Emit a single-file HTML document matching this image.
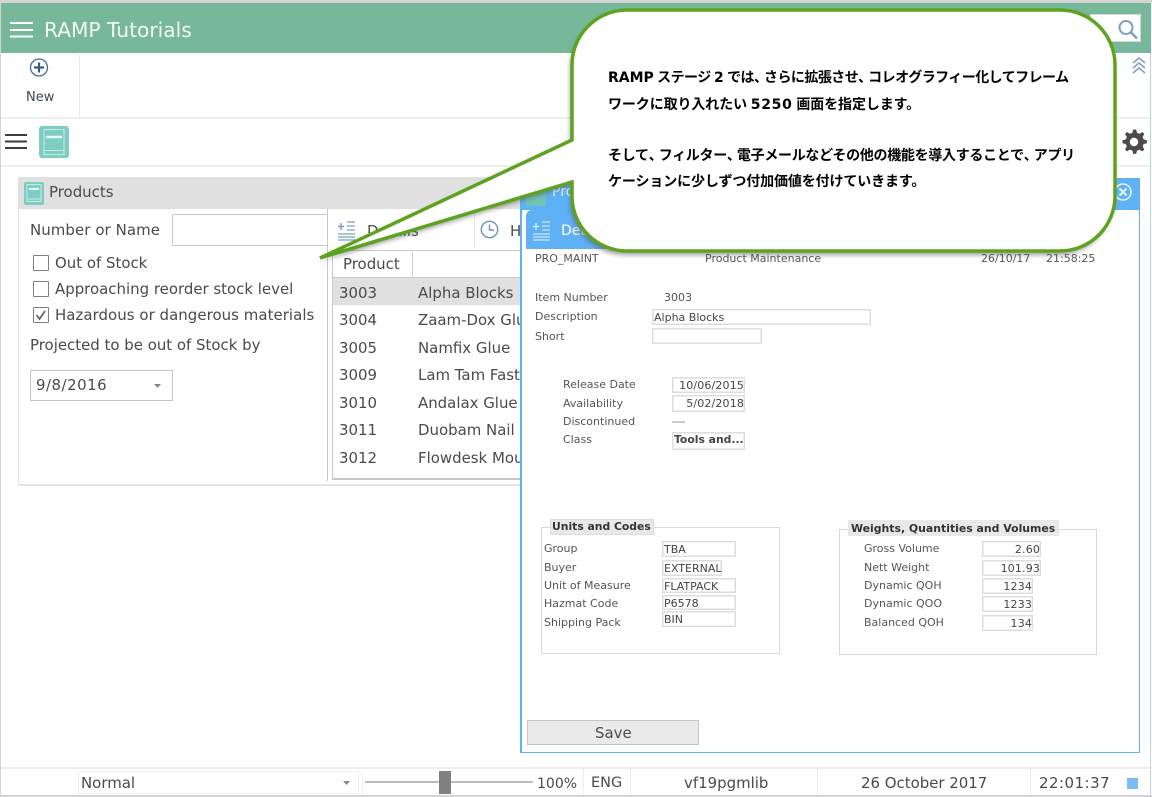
<!DOCTYPE html>
<html lang="ja"><head><meta charset="utf-8"><title>RAMP Tutorials</title>
<style>
html,body{margin:0;padding:0;background:#fff}
#r{position:relative;width:1152px;height:797px;overflow:hidden;background:#fff;font-family:"DejaVu Sans","Liberation Sans",sans-serif;color:#444;font-size:14px;filter:blur(.3px)}
#r div,#r span.t{position:absolute;white-space:nowrap}
.t{line-height:16px}
.m{font-size:14.950px;color:#4a4a4a}
.s{font-size:11px;color:#555;line-height:12px;transform:translateY(1px)}
.f{border:1px solid #ddd;box-shadow:inset 0 0 0 1px #eee;box-sizing:border-box;font-size:11px;color:#444;line-height:15px;padding:0 1px;background:#fff}
.rr{text-align:right;padding-right:0;letter-spacing:.15px}
.cb{width:16px;height:16px;border:1.500px solid #808080;border-radius:1px;box-sizing:border-box;background:#fff}
.j{font-family:"Liberation Sans","Noto Sans CJK JP",sans-serif;font-weight:700;font-size:14px;color:#000;line-height:20px;letter-spacing:-.25px}
.j b{font-family:"DejaVu Sans",sans-serif;font-weight:700;letter-spacing:0}
.j i{font-style:normal;letter-spacing:-4px}
svg{position:absolute;overflow:visible}
</style></head><body><div id="r">
<!-- frame -->
<div style="left:0;top:0;width:1152px;height:3px;background:#d4d4d4"></div>
<div style="left:0;top:0;width:1px;height:797px;background:#d4d4d4"></div>
<div style="left:1150px;top:53px;width:1px;height:744px;background:#bcd4ea"></div>
<div style="left:0;top:795px;width:1152px;height:2px;background:#d4d4d4"></div>
<!-- header -->
<div style="left:1px;top:3px;width:1150px;height:50px;background:#76b899"></div>
<svg style="left:0;top:0" width="40" height="50"><path d="M10 23H33M10 30H33M10 36.500H33" stroke="#fff" stroke-width="2"/></svg>
<span class="t" style="left:44px;top:18px;font-size:20.200px;line-height:24px;color:#f4fbf7">RAMP Tutorials</span>
<div style="left:1090px;top:14px;width:51px;height:28px;background:#fff;border:1px solid #d8d8d8;box-sizing:border-box"></div>
<svg style="left:1115px;top:17px" width="26" height="26" fill="none" stroke="#7b9fba" stroke-width="2"><circle cx="11" cy="10.500" r="6.500"/><path d="M16 15.500L22 21.500" stroke-width="2.500"/></svg>
<!-- toolbar -->
<svg style="left:28px;top:57px" width="22" height="22"><circle cx="11" cy="10.500" r="8.500" fill="none" stroke="#4a6d92" stroke-width="1.300"/><path d="M6 10.500H16M11 5.500V15.500" stroke="#38597f" stroke-width="2.200"/></svg>
<span class="t" style="left:26px;top:90px;font-size:13px;color:#3e4a55">New</span>
<div style="left:79px;top:55px;width:1px;height:61px;background:#e8e8e8"></div>
<svg style="left:1131px;top:56px" width="16" height="18" fill="none" stroke="#7d9fbf" stroke-width="1.500"><path d="M2 7L8 2L14 7M2 12L8 7L14 12M2 17L8 12L14 17"/></svg>
<div style="left:1px;top:117px;width:1149px;height:2px;background:#efefef"></div>
<!-- row 2 -->
<svg style="left:0;top:128px" width="30" height="26"><path d="M5 7H27M5 13.500H27M5 20H27" stroke="#3d3d3d" stroke-width="2"/></svg>
<div style="left:39px;top:126px;width:30px;height:32px;background:#7dcdc2;border-radius:3px"></div>
<svg style="left:39px;top:126px" width="30" height="32" fill="none"><rect x="5" y="3.500" width="20" height="25" stroke="#c6ebe5" stroke-width="1"/><path d="M7 11H23" stroke="#e8f8f5" stroke-width="2.500"/><path d="M5 24.500H25" stroke="#c6ebe5"/></svg>
<svg style="left:1121px;top:128px" width="26" height="28"><path d="M13 1.500l2.200 0 .8 3.300 2.500 1 2.900-1.800 2 2-1.800 2.900 1 2.500 3.300.8v3l-3.300.8-1 2.500 1.800 2.900-2 2-2.900-1.800-2.500 1-.8 3.300h-3l-.8-3.300-2.500-1-2.900 1.800-2-2 1.800-2.900-1-2.500-3.300-.8v-3l3.300-.8 1-2.500-1.800-2.900 2-2 2.900 1.800 2.500-1 .8-3.300z" fill="#4b4b4b"/><circle cx="13" cy="14" r="4.200" fill="#fff"/></svg>
<div style="left:1px;top:165px;width:1149px;height:2px;background:#efefef"></div>
<!-- Products panel -->
<div style="left:18px;top:177px;width:503px;height:32px;background:#e0e0e0"></div>
<div style="left:18px;top:209px;width:1px;height:276px;background:#e2e2e2"></div>
<div style="left:18px;top:484px;width:503px;height:1.500px;background:#e4e4e4"></div>
<div style="left:24px;top:182px;width:20px;height:23px;background:#7dcdc2;border-radius:2px"></div>
<svg style="left:24px;top:182px" width="20" height="23" fill="none"><rect x="3" y="2.500" width="14" height="17" stroke="#c6ebe5"/><path d="M5 7H15" stroke="#e8f8f5" stroke-width="2"/><path d="M3 17H17" stroke="#c6ebe5"/></svg>
<span class="t m" style="left:49px;top:184px">Products</span>
<span class="t m" style="left:30px;top:222px;letter-spacing:.08px">Number or Name</span>
<div style="left:172px;top:214px;width:156px;height:32px;border:1px solid #c8c8c8;box-sizing:border-box"></div>
<div style="left:327px;top:209px;width:1px;height:272px;background:#c8c8c8"></div>
<div class="cb" style="left:33px;top:255px"></div>
<span class="t m" style="left:55px;top:255px">Out of Stock</span>
<div class="cb" style="left:33px;top:281px"></div>
<span class="t m" style="left:55px;top:281px">Approaching reorder stock level</span>
<div class="cb" style="left:33px;top:307px"></div>
<svg style="left:33px;top:307px" width="16" height="16" fill="none"><path d="M3.500 8L6.500 12L12 4" stroke="#666" stroke-width="1.800"/></svg>
<span class="t m" style="left:55px;top:307px;letter-spacing:.05px">Hazardous or dangerous materials</span>
<span class="t m" style="left:30px;top:337px">Projected to be out of Stock by</span>
<div style="left:30px;top:370px;width:143px;height:31px;border:1px solid #c4c4c4;box-sizing:border-box"></div>
<span class="t m" style="left:36px;top:377px;letter-spacing:.5px">9/8/2016</span>
<svg style="left:153px;top:383px" width="10" height="6"><path d="M1 1H8L4.500 5z" fill="#888"/></svg>
<!-- details tabs -->
<svg style="left:337px;top:219px" width="20" height="22" fill="none" stroke="#7d9fbf"><path d="M4 4V11M1 7.500H7" stroke-width="1.500"/><path d="M10 3H18M10 7H18M10 11H18M1 15H18M1 18H18M1 21H18" stroke-width="1.300"/></svg>
<span class="t m" style="left:367px;top:223px">Details</span>
<div style="left:474px;top:212px;width:1px;height:36px;background:#e8e8e8"></div>
<svg style="left:480px;top:220px" width="20" height="20" fill="none" stroke="#6f93b3" stroke-width="1.400"><circle cx="9.500" cy="9.500" r="8.200"/><path d="M9.500 4.500V10H14"/></svg>
<span class="t m" style="left:510px;top:223px">H</span>
<div style="left:332px;top:250px;width:190px;height:1px;background:#c8c8c8"></div>
<div style="left:332px;top:250px;width:1px;height:229px;background:#c8c8c8"></div>
<div style="left:332px;top:478px;width:190px;height:1.500px;background:#c8c8c8"></div>
<div style="left:412px;top:251px;width:1px;height:26px;background:#d0d0d0"></div>
<span class="t m" style="left:343px;top:256px">Product</span>
<div style="left:333px;top:277px;width:188px;height:1px;background:#c8c8c8"></div>
<div style="left:333px;top:278px;width:188px;height:27px;background:#e0e0e0"></div>
<span class="t m" style="left:339px;top:285px">3003</span><span class="t m" style="left:418px;top:285px">Alpha Blocks</span>
<span class="t m" style="left:339px;top:312px">3004</span><span class="t m" style="left:418px;top:312px;width:102px;overflow:hidden">Zaam-Dox Glue</span>
<span class="t m" style="left:339px;top:340px">3005</span><span class="t m" style="left:418px;top:340px">Namfix Glue</span>
<span class="t m" style="left:339px;top:367px">3009</span><span class="t m" style="left:418px;top:367px;width:102px;overflow:hidden">Lam Tam Fastener</span>
<span class="t m" style="left:339px;top:395px">3010</span><span class="t m" style="left:418px;top:395px;width:102px;overflow:hidden">Andalax Glue</span>
<span class="t m" style="left:339px;top:422px">3011</span><span class="t m" style="left:418px;top:422px;width:102px;overflow:hidden">Duobam Nail</span>
<span class="t m" style="left:339px;top:450px">3012</span><span class="t m" style="left:418px;top:450px;width:102px;overflow:hidden">Flowdesk Mouse</span>
<!-- window -->
<div style="left:520px;top:178px;width:620px;height:575px;background:#fff;border:1px solid #5fb1f5;border-left-width:2px;box-sizing:border-box"></div>
<div style="left:520px;top:178px;width:620px;height:32px;background:#5fb1f5"></div>
<div style="left:526px;top:182px;width:20px;height:24px;background:#6fc2b8"></div>
<span class="t" style="left:552px;top:184px;font-size:14px;color:#eaf5ff">Products</span>
<svg style="left:1113px;top:182px" width="20" height="20" fill="none" stroke="#e8f4ff" stroke-width="1.600"><circle cx="10" cy="10" r="8"/><path d="M6.500 6.500L13.500 13.500M13.500 6.500L6.500 13.500" stroke-width="2"/></svg>
<div style="left:526px;top:210px;width:330px;height:39px;background:#5fb1f5;border-radius:6px 0 0 0"></div>
<svg style="left:532px;top:220px" width="20" height="22" fill="none" stroke="#cfe6fb"><path d="M4 3V10M1 6.500H7" stroke-width="1.500"/><path d="M10 2H18M10 6H18M10 10H18M1 14H18M1 17H18M1 20H18" stroke-width="1.300"/></svg>
<span class="t" style="left:561px;top:223px;font-size:14px;color:#fff">Details</span>
<span class="t s" style="left:535px;top:252px">PRO_MAINT</span>
<span class="t s" style="left:705px;top:252px">Product Maintenance</span>
<span class="t s" style="left:981px;top:252px">26/10/17</span>
<span class="t s" style="left:1046px;top:252px">21:58:25</span>
<span class="t s" style="left:535px;top:291px">Item Number</span>
<span class="t s" style="left:664px;top:291px">3003</span>
<span class="t s" style="left:535px;top:310px">Description</span>
<div class="f" style="left:652px;top:309px;width:219px;height:16px">Alpha Blocks</div>
<span class="t s" style="left:535px;top:330px">Short</span>
<div class="f" style="left:652px;top:328px;width:110px;height:16px"></div>
<span class="t s" style="left:563px;top:378px">Release Date</span>
<div class="f rr" style="left:672px;top:377px;width:73px;height:16px">10/06/2015</div>
<span class="t s" style="left:563px;top:397px">Availability</span>
<div class="f rr" style="left:672px;top:395px;width:73px;height:17px">5/02/2018</div>
<span class="t s" style="left:563px;top:415px">Discontinued</span>
<div style="left:672px;top:421px;width:13px;height:2px;background:#ccc"></div>
<span class="t s" style="left:563px;top:433px">Class</span>
<div class="f" style="left:672px;top:432px;width:73px;height:18px;font-weight:700;line-height:14px;overflow:hidden;font-size:10.800px">Tools and...</div>
<!-- fieldsets -->
<div style="left:541px;top:527px;width:239px;height:127px;border:1px solid #d8d8d8;box-sizing:border-box"></div>
<div style="left:550px;top:519px;height:16px;width:104px;background:#e8e8e8;border:1px solid #ddd;box-sizing:border-box"></div>
<span class="t s" style="left:552px;top:520px;font-weight:700;color:#333;font-size:10.800px">Units and Codes</span>
<span class="t s" style="left:544px;top:542px">Group</span><div class="f" style="left:662px;top:541px;width:74px;height:16px">TBA</div>
<span class="t s" style="left:544px;top:561px">Buyer</span><div class="f" style="left:662px;top:560px;width:60px;height:16px">EXTERNAL</div>
<span class="t s" style="left:544px;top:579px">Unit of Measure</span><div class="f" style="left:662px;top:578px;width:74px;height:15px">FLATPACK</div>
<span class="t s" style="left:544px;top:597px">Hazmat Code</span><div class="f" style="left:662px;top:595px;width:74px;height:15px">P6578</div>
<span class="t s" style="left:544px;top:616px">Shipping Pack</span><div class="f" style="left:662px;top:611px;width:74px;height:16px">BIN</div>
<div style="left:839px;top:529px;width:258px;height:126px;border:1px solid #d8d8d8;box-sizing:border-box"></div>
<div style="left:848px;top:520px;height:16px;width:211px;background:#e8e8e8;box-sizing:border-box"></div>
<span class="t s" style="left:851px;top:522px;font-weight:700;color:#333;font-size:10.900px">Weights, Quantities and Volumes</span>
<span class="t s" style="left:864px;top:542px">Gross Volume</span><div class="f rr" style="left:982px;top:541px;width:59px;height:16px">2.60</div>
<span class="t s" style="left:864px;top:561px">Nett Weight</span><div class="f rr" style="left:982px;top:560px;width:59px;height:16px">101.93</div>
<span class="t s" style="left:864px;top:579px">Dynamic QOH</span><div class="f rr" style="left:982px;top:578px;width:51px;height:16px">1234</div>
<span class="t s" style="left:864px;top:597px">Dynamic QOO</span><div class="f rr" style="left:982px;top:596px;width:51px;height:16px">1233</div>
<span class="t s" style="left:864px;top:616px">Balanced QOH</span><div class="f rr" style="left:982px;top:615px;width:51px;height:16px">134</div>
<div style="left:527px;top:720px;width:172px;height:25px;background:#e9e9e9;border:1.500px solid #c4c4c4;box-sizing:border-box"></div>
<span class="t m" style="left:595px;top:725px">Save</span>
<!-- status bar -->
<div style="left:1px;top:767px;width:1149px;height:2px;background:#eee"></div>
<div style="left:78px;top:771px;width:281px;height:23px;border:1px solid #eee;box-sizing:border-box"></div>
<span class="t m" style="left:81px;top:775px">Normal</span>
<svg style="left:342px;top:780px" width="10" height="6"><path d="M1 1H8L4.500 5z" fill="#888"/></svg>
<div style="left:362px;top:771px;width:1px;height:23px;background:#eee"></div>
<div style="left:365px;top:781px;width:168px;height:1.500px;background:#bbb"></div>
<div style="left:439px;top:771px;width:12px;height:23px;background:#808080"></div>
<span class="t m" style="left:537px;top:776px;font-size:14px">100%</span>
<div style="left:583px;top:769px;width:1px;height:26px;background:#eee"></div>
<span class="t m" style="left:591px;top:775px;font-size:14.500px">ENG</span>
<div style="left:630px;top:769px;width:1px;height:26px;background:#eee"></div>
<span class="t m" style="left:684px;top:775px">vf19pgmlib</span>
<div style="left:817px;top:769px;width:1px;height:26px;background:#eee"></div>
<span class="t m" style="left:861px;top:775px">26 October 2017</span>
<div style="left:1030px;top:769px;width:1px;height:26px;background:#eee"></div>
<span class="t m" style="left:1039px;top:775px;letter-spacing:.5px">22:01:37</span>
<div style="left:1127px;top:778px;width:11px;height:11px;background:#7cbcf6"></div>
<!-- callout -->
<svg style="left:0;top:0;pointer-events:none" width="1152" height="797">
<defs><filter id="sh" x="-10%" y="-10%" width="120%" height="125%"><feGaussianBlur stdDeviation="2.500"/></filter></defs>
<path d="M627 10H1060A55 55 0 0 1 1115 65V196A55 55 0 0 1 1060 251H627A55 55 0 0 1 572 196V182L320 258L572 140V65A55 55 0 0 1 627 10Z" fill="#555" opacity=".55" filter="url(#sh)" transform="translate(-2 4)"/>
<path d="M627 10H1060A55 55 0 0 1 1115 65V196A55 55 0 0 1 1060 251H627A55 55 0 0 1 572 196V182L320 258L572 140V65A55 55 0 0 1 627 10Z" fill="#fff" stroke="#5ea320" stroke-width="3.500" stroke-linejoin="miter"/>
</svg>
<span class="t j" style="left:608px;top:67px;letter-spacing:-.55px"><b>RAMP</b> ステージ <b>2</b> では<i>、</i>さらに拡張させ<i>、</i>コレオグラフィー化してフレーム</span>
<span class="t j" style="left:608px;top:94px;letter-spacing:-.1px">ワークに取り入れたい <b style="letter-spacing:.7px">5250</b> 画面を指定します。</span>
<span class="t j" style="left:608px;top:145px;letter-spacing:-.3px">そして<i>、</i>フィルター<i>、</i>電子メールなどその他の機能を導入することで<i>、</i>アプリ</span>
<span class="t j" style="left:608px;top:171px;letter-spacing:-.12px">ケーションに少しずつ付加価値を付けていきます。</span>
</div></body></html>
